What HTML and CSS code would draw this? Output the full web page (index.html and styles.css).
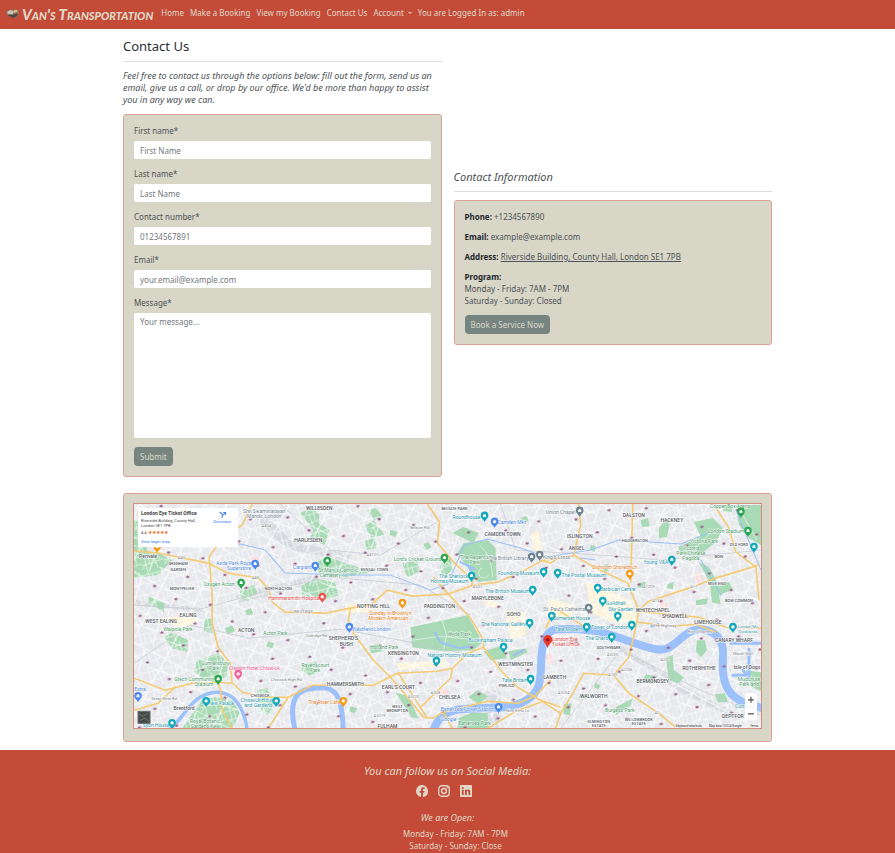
FILE: index.html
```html
<!DOCTYPE html>
<html lang="en">
<head>
<meta charset="utf-8">
<meta name="viewport" content="width=device-width, initial-scale=1">
<title>Van's Transportation - Contact Us</title>
<link rel="stylesheet" href="styles.css">
</head>
<body>
<header class="navbar">
  <a class="brand" href="#">
    <svg class="brand-logo" viewBox="0 0 14 11" aria-hidden="true">
      <path d="M0 4 3 2 11 1 13 4 12 8 7 10 1 7Z" fill="#8d745c"/>
      <path d="M1 4 4 2 8 3 7 6 2 6Z" fill="#c8c3b4"/>
      <path d="M8 2 11 2 12 4 8 5Z" fill="#d9b27a"/>
      <path d="M1 7 7 7 12 5 11 8 7 10Z" fill="#4b4a48"/>
    </svg>
    <span>Van's Transportation</span>
  </a>
  <nav class="nav-links" aria-label="Main">
    <a href="#">Home</a>
    <a href="#">Make a Booking</a>
    <a href="#">View my Booking</a>
    <a href="#">Contact Us</a>
    <button type="button" class="nav-toggle">Account<span class="caret"></span></button>
    <span>You are Logged In as: admin</span>
  </nav>
</header>

<main class="container">
  <div class="columns">
    <section class="form-column">
      <h1>Contact Us</h1>
      <hr>
      <p class="intro">Feel free to contact us through the options below: fill out the form, send us an email, give us a call, or drop by our office. We'd be more than happy to assist you in any way we can.</p>
      <form class="card">
        <div class="field"><label for="first">First name*</label><input id="first" type="text" placeholder="First Name"></div>
        <div class="field"><label for="last">Last name*</label><input id="last" type="text" placeholder="Last Name"></div>
        <div class="field"><label for="phone">Contact number*</label><input id="phone" type="tel" placeholder="01234567891"></div>
        <div class="field"><label for="email">Email*</label><input id="email" type="email" placeholder="your.email@example.com"></div>
        <div class="field"><label for="message">Message*</label><textarea id="message" placeholder="Your message..."></textarea></div>
        <button type="submit" class="btn">Submit</button>
      </form>
    </section>

    <section class="info-column">
      <h2>Contact Information</h2>
      <hr>
      <div class="card info">
        <p><strong>Phone:</strong> +1234567890</p>
        <p><strong>Email:</strong> example@example.com</p>
        <p><strong>Address:</strong> <a href="#">Riverside Building, County Hall, London SE1 7PB</a></p>
        <p><strong>Program:</strong><br>Monday - Friday: 7AM - 7PM<br>Saturday - Sunday: Closed</p>
        <a class="btn" href="#">Book a Service Now</a>
      </div>
    </section>
  </div>

  <section class="card map-card">
    <svg class="map" viewBox="134 504 626 224" role="img" aria-label="Map of London">
      <defs>
        <pattern id="streets" width="23" height="19" patternUnits="userSpaceOnUse" patternTransform="rotate(-14)">
          <path d="M0 4H23M0 13H12L23 11M5 0V19M14 4 16 19M19 0V11M0 17 5 13M9 4V13" fill="none" stroke="#fff" stroke-width=".8"/>
        </pattern>
        <pattern id="lanes" width="37" height="31" patternUnits="userSpaceOnUse" patternTransform="rotate(28)">
          <path d="M0 8H37M11 0V31M26 8 30 31M0 23 26 19" fill="none" stroke="#fff" stroke-width="1.1"/>
        </pattern>
        <pattern id="stations" width="71" height="47" patternUnits="userSpaceOnUse" patternTransform="rotate(-9)">
          <g fill="#d85563"><circle cx="9" cy="8" r="1.2"/><circle cx="42" cy="19" r="1.2"/><circle cx="61" cy="39" r="1.2"/><circle cx="24" cy="35" r="1.2"/></g>
          <path d="M7 8H11M40 19H44M59 39H63M22 35H26" stroke="#5267a8" stroke-width=".7"/>
        </pattern>
        <g id="pin"><path d="M0 0C-.6-2.300-3.800-3.600-3.800-6.600A3.800 3.800 0 0 1 3.800-6.600C3.800-3.600.6-2.300 0 0Z"/><path d="M-1.500-5V-7L0-8.300 1.500-7V-5Z" fill="#fff"/></g>
      </defs>
      <rect x="134" y="504" width="626" height="224" fill="#e7e9ed"/>
      <g fill="#fbf3da">
        <path d="M530 535 538 530 542 550 534 555ZM585 580 630 600 638 622 610 622 590 612ZM548 598 575 605 570 618 545 616ZM395 663 445 660 450 666 400 670ZM345 603 385 606 370 612 345 613ZM160 618 195 614 198 622 180 628ZM505 610 525 612 525 635 510 640ZM484 600 500 603 498 608 484 606Z"/>
      </g>
      <g fill="#fbdedd"><path d="M660 600 668 604 664 611 657 606ZM545 655 552 653 553 662 547 664ZM252 556 259 558 256 564 251 562ZM440 688 449 690 446 697 438 695ZM694 575 700 572 702 580 695 584Z"/></g>
      <g fill="#d8dbe0">
        <path d="M262 512 290 540 350 555 348 561 285 549 258 520ZM235 595 275 585 315 575 316 582 275 594 238 603ZM485 690 500 690 498 728 484 728ZM620 645 690 690 740 715 738 720 684 695 618 650ZM136 600 205 608 204 612 135 605Z"/>
      </g>
      <g fill="#a8dab5">
        <path d="M134 520 143 524 147 551 158 553 172 560 158 575 134 578ZM300 513 312 508 319 515 318 523 329 530 324 546 310 538 313 530ZM318 560 330 558 345 563 372 572 345 577 318 573ZM302 585 315 578 335 583 338 595 325 599 300 595ZM240 590 254 585 257 592 247 601 240 597ZM149 595 164 603 164 612 148 602ZM204 618 213 618 212 633 204 631ZM172 632 188 640 187 652 172 648 164 637Z"/>
        <path d="M197 660 218 653 228 663 226 677 205 680 194 671ZM182 728 202 700 215 697 232 700 240 713 232 728ZM257 690 267 688 274 702 268 715 261 711ZM303 663 316 662 320 671 309 675 301 670ZM365 526 373 520 384 535 371 538ZM365 540 374 538 376 548 365 550ZM366 510 375 508 383 517 374 520ZM439 566 450 557 452 570 442 578ZM402 563 417 561 419 571 407 578Z"/>
      </g>
      <rect x="134" y="504" width="626" height="224" fill="url(#streets)" opacity=".75"/>
      <rect x="134" y="504" width="626" height="224" fill="url(#lanes)" opacity=".8"/>
      <g fill="#a8dab5">
        <path d="M457 553 463 543 487 540 495 548 496 580 477 582 467 568ZM452 533 463 527 478 533 473 543ZM410 627 467 615 482 642 473 650 443 651 412 647ZM483 651 503 645 506 658 490 660ZM508 651 525 648 527 652 510 660ZM458 718 472 712 487 713 489 728 457 728ZM395 692 408 696 418 718 411 717ZM468 697 477 690 488 696 478 704ZM369 646 379 643 382 651 371 653Z"/>
        <path d="M677 547 700 537 693 522 712 518 722 528 715 542 695 558 680 552ZM735 505 760 505 760 545 748 538 738 525ZM698 562 708 567 717 583 728 582 732 589 718 595 720 604 711 602 709 583ZM658 528 664 521 669 524 666 537 658 538ZM665 657 672 655 673 670 683 677 678 683 668 680ZM615 707 632 698 630 705 615 715ZM696 640 704 640 706 650 700 657 695 651ZM645 674 656 676 651 684 642 680ZM563 704 571 703 569 715 563 714ZM640 520 647 518 649 526 641 527ZM724 505 732 505 731 512 722 511ZM714 694 724 693 727 702 717 702ZM745 670 760 672 760 691 750 686ZM695 600 707 598 706 604 695 605Z"/>
        <path d="M150 508h8v5h-8zM225 628l7-3 3 6-8 3zM245 610l6-2 2 6-6 1zM268 641l6 2-2 5-6-2zM390 530l7 2-2 5-6-2zM423 544l5-2 3 5-5 3zM590 545l5 1-1 6-5-2zM601 567l6-3 3 5-6 3zM638 583l7-1-1 6-7-1zM520 518l6-2 2 5-6 2zM595 683l5 2-2 4-5-2zM667 584l6-2-1 7-6-1zM580 693l7 1-2 5-7-2zM350 706l7 2-3 5-5-2z"/>
      </g>
      <path d="M441 618 446 635 443 650M462 572C470 562 478 556 490 560M479 545C488 553 491 562 492 577M482 568A5 5 0 1 0 488 574M412 640 440 636 478 640M690 552 715 528M740 512 756 540" fill="none" stroke="#e4f2e6" stroke-width=".8"/>
      <g fill="none" stroke="#c3c8d0" stroke-width=".7">
        <path d="M134 605 200 609 270 590 330 577 420 585 470 615M500 504 515 550 600 555 660 560 760 550M134 663 190 625 250 638 340 629 400 640 480 657M560 728 620 650 700 690 760 715M280 504 330 550 380 555 440 520"/>
      </g>
      <g fill="none" stroke="#9cc0f9" stroke-linecap="round" stroke-linejoin="round">
        <path d="M168 730C180 722 187 706 197 699S217 690 227 694 245 712 247 730" stroke-width="3.500"/>
        <path d="M295 730C289 707 293 692 307 689S333 686 338 698 342 718 343 730" stroke-width="5"/>
        <path d="M433 730C438 716 446 711 460 709 485 706 507 710 522 702S539 687 540 673 540 652 543 643 549 629 558 629 584 628 600 632 632 643 650 648 672 644 684 635 709 628 717 637 721 657 722 671 728 695 742 702L762 708" stroke-width="8"/>
        <path d="M460 562 474 569M468 565 472 573M434 632 440 642 459 648 471 646M513 655 523 650" stroke-width="2"/>
        <path d="M209 545 240 544 265 550 285 573 345 575 390 575 430 590 447 584 464 545 487 539 520 548 545 557 590 550 618 540 680 544 710 532M580 558 595 560M700 560 720 595M735 510 760 570" stroke-width="1"/>
        <path d="M730 643H760M732 675H748V649M748 677 742 670M651 626 657 624" stroke-width="3"/>
      </g>
      <g fill="none" stroke="#f5cb73" stroke-width="1.600" stroke-linejoin="round">
        <path d="M134 551 158 553 208 563 228 573 258 578 268 588 272 602 285 612 325 613 350 608 370 605 387 590 412 596 447 594 473 585 497 582 520 572 543 560 557 558 573 556"/>
        <path d="M252 504 242 525 222 538 209 557 212 595 212 623 218 647 230 663 232 682"/>
        <path d="M134 678 165 690 192 683 218 682 233 683 242 692 265 697 288 697 312 685 340 685 373 685 397 673 437 671 452 668 467 653 483 647 500 670 517 687 540 700 560 707"/>
        <path d="M134 710 158 703 176 686M218 682 221 693 222 710 232 728M288 697 268 728"/>
        <path d="M427 504 439 522 437 543 453 562 472 580 471 586M433 577 447 593 470 618 483 640V648"/>
        <path d="M350 608 348 620 353 633 373 660 390 677 407 697 423 717 432 718 443 712 487 701 517 703 534 696 550 680M398 673 420 707 450 678 452 668M420 707 427 718M443 712 452 728"/>
        <path d="M578 504 580 525 573 555 595 568 627 583 633 598 638 610 634 632 628 657 613 675 583 673 572 693 560 713 555 728M630 582 632 504M557 610 583 626M638 610 648 601 688 588 715 578 758 565"/>
        <path d="M715 508 728 528 735 552 755 567 758 600M636 611 698 617 725 627 760 628M637 622 670 626 695 624 715 632M613 675 628 693 658 713 675 727M560 713 540 700M540 560 550 563 557 558M487 728 515 711 540 702M551 616 545 628"/>
      </g>
      <rect x="134" y="504" width="626" height="224" fill="url(#stations)"/>

      <g class="area">
        <text x="319" y="510">WILLESDEN</text><text x="308" y="542">HARLESDEN</text><text x="278" y="590" class="sm">NORTH ACTON</text><text x="182" y="590" class="sm">MONTPELIER</text><text x="188" y="617">EALING</text><text x="161" y="623">WEST EALING</text><text x="246" y="632">ACTON</text><text x="260" y="697" class="sm">CHISWICK</text>
        <text x="343" y="640">SHEPHERD'S</text><text x="346" y="646">BUSH</text><text x="345" y="686">HAMMERSMITH</text><text x="373" y="608">NOTTING HILL</text><text x="439" y="608">PADDINGTON</text><text x="454" y="510" class="sm">BELSIZE PARK</text><text x="502" y="536">CAMDEN TOWN</text><text x="487" y="600">MARYLEBONE</text><text x="513" y="616">SOHO</text><text x="403" y="655">KENSINGTON</text><text x="398" y="689">EARL'S COURT</text><text x="449" y="699">CHELSEA</text><text x="397" y="708" class="sm">WEST</text><text x="397" y="712" class="sm">BROMPTON</text><text x="387" y="728">FULHAM</text>
        <text x="515" y="666">WESTMINSTER</text><text x="506" y="687" class="sm">PIMLICO</text><text x="554" y="679">LAMBETH</text><text x="593" y="698">WALWORTH</text><text x="652" y="683">BERMONDSEY</text><text x="698" y="670">ROTHERHITHE</text><text x="733" y="642">CANARY WHARF</text><text x="707" y="624">LIMEHOUSE</text><text x="674" y="618">SHADWELL</text><text x="652" y="612">WHITECHAPEL</text><text x="579" y="538">ISLINGTON</text><text x="576" y="550">ANGEL</text><text x="633" y="517">DALSTON</text><text x="671" y="522">HACKNEY</text><text x="634" y="542" class="sm">HAGGERSTON</text><text x="718" y="558" class="sm">BOW</text><text x="738" y="546" class="sm">OLD FORD</text><text x="738" y="602" class="sm">BOW COMMON</text><text x="716" y="585" class="sm">MILE END</text><text x="732" y="718">DEPTFOR</text><text x="598" y="723" class="sm">ELMINGTON</text><text x="598" y="727" class="sm">ESTATE</text><text x="638" y="721" class="sm">WILLOWBROOK</text><text x="638" y="725" class="sm">ESTATE</text><text x="608" y="649" class="sm">SOUTHWARK</text><text x="178" y="565" class="sm">GRENHAM</text><text x="178" y="571" class="sm">GARDEN</text><text x="374" y="571" class="sm">KENSAL TOWN</text>
        <text x="148" y="558">Perivale</text><text x="184" y="710">Brentford</text><text x="746" y="669">Isle of Dogs</text>
      </g>
      <g class="place" fill="#4a9a68">
        <text x="178" y="631">Walpole Park</text><text x="275" y="635">Acton Park</text><text x="215" y="665">Gunnersbury</text><text x="214" y="670">Park</text><text x="194" y="681">Gtech Community</text><text x="204" y="686">Stadium</text><text x="219" y="586">Oxygen Acton</text><text x="338" y="572">St Mary's Catholic</text><text x="330" y="577">Cemetery</text><text x="205" y="723">Royal Botanic</text><text x="205" y="728">Gardens Kew</text><text x="315" y="667">Ravenscourt</text><text x="315" y="672">Park</text><text x="384" y="649">Holland Park</text><text x="459" y="636">Hyde Park</text><text x="417" y="561">Lord's Cricket Ground</text><text x="474" y="559">The Regent's</text><text x="474" y="564">Park</text><text x="474" y="725">Battersea Park</text><text x="619" y="712">Burgess Park</text><text x="703" y="543">Victoria Park</text><text x="690" y="550">Victoria</text><text x="690" y="555">Park Chinese</text><text x="690" y="560">Pagoda</text><text x="725" y="533">London Stadium</text><text x="729" y="508">Copper Box Arena</text><text x="748" y="681">Mudchute</text><text x="748" y="686">Park and</text>
      </g>
      <g class="place" fill="#2b98ab">
        <text x="466" y="519">Roundhouse</text><text x="453" y="578">The Sherlock</text><text x="449" y="583">Holmes Museum</text><text x="518" y="575">Founding Museum</text><text x="507" y="593">The British Museum</text><text x="583" y="577">The Postal Museum</text><text x="617" y="591">Barbican Centre</text><text x="615" y="605">Guildhall</text><text x="620" y="611">Sky Garden</text><text x="571" y="620">Somerset House</text><text x="503" y="626">The National Gallery</text><text x="490" y="642">Buckingham Palace</text><text x="454" y="657">Natural History Museum</text><text x="514" y="682">Tate Britain</text><text x="568" y="631">Tate Modern</text><text x="609" y="629">Tower of London</text><text x="596" y="640">The Shard</text><text x="655" y="564">Young V&amp;A</text><text x="747" y="628" class="narrow">London Mu</text><text x="747" y="633" class="narrow">Docklands</text><text x="221" y="705">Kew Palace</text><text x="258" y="702">Chiswick House</text><text x="258" y="707">and Gardens</text><text x="156" y="727">Syon House</text><text x="740" y="708">Cutty</text>
      </g>
      <g class="place" fill="#4c89df">
        <text x="234" y="565">Asda Park Royal</text><text x="239" y="570">Superstore</text><text x="302" y="569">Cargiant</text><text x="371" y="631">Westfield London</text><text x="511" y="524">Camden Mkt</text><text x="467" y="711">Battersea Power Station</text><text x="140" y="691">Extra</text><text x="448" y="721">Google</text>
      </g>
      <g class="place" fill="#71838f"><text x="264" y="513">Shri Swaminarayan</text><text x="264" y="518">Mandir, London</text><text x="508" y="560">The British Library</text><text x="556" y="559">King's Cross</text><text x="560" y="514">Union Chapel</text><text x="564" y="611">St. Paul's Cathedral</text></g>
      <g class="place" fill="#e37f23"><text x="390" y="615">Sunday in Brooklyn</text><text x="390" y="620">Modern American...</text><text x="614" y="569">Dishoom Shoreditch</text><text x="324" y="704">The River Cafe</text></g>
      <g class="place" fill="#e04445"><text x="294" y="600">Hammersmith Hospital</text><text x="564" y="641">London Eye</text><text x="565" y="646">Ticket Office</text></g>
      <g class="place" fill="#e35289"><text x="254" y="670">Clayton Hotel Chiswick</text></g>
      <g class="road">
        <text x="181" y="559">A40</text><text x="255" y="579">A40</text><text x="303" y="613">WESTWAY</text><text x="266" y="527">A404</text><text x="419" y="529">Belsize Rd</text><text x="372" y="556">A4127</text><text x="477" y="588">A501</text><text x="693" y="588">A11</text><text x="655" y="602">A13</text><text x="648" y="588">A1209</text><text x="664" y="661">A200</text><text x="612" y="656">A3200</text><text x="612" y="676">A100</text><text x="626" y="671">A2206</text><text x="656" y="714">A2</text><text x="563" y="694">A3204</text><text x="379" y="717">A3219</text><text x="435" y="694">A308</text><text x="413" y="698">A3220</text><text x="286" y="681">Chiswick High Rd</text><text x="164" y="700">Great West Rd</text><text x="699" y="633">River Thames</text><text x="517" y="712">Nine Elms Ln</text><text x="742" y="655">Marsh Wall</text><text x="316" y="637">Uxbridge Rd</text><text x="664" y="627">The Highway</text>
      </g>

      <g fill="#2aa650"><use href="#pin" x="241" y="589"/><use href="#pin" x="327" y="567"/><use href="#pin" x="218" y="685"/><use href="#pin" x="444" y="564"/><use href="#pin" x="740" y="518"/><use href="#pin" x="747" y="537"/></g>
      <g fill="#12a9bb"><use href="#pin" x="484" y="522"/><use href="#pin" x="471" y="582"/><use href="#pin" x="543" y="578"/><use href="#pin" x="557" y="579"/><use href="#pin" x="532" y="596"/><use href="#pin" x="597" y="594"/><use href="#pin" x="602" y="607"/><use href="#pin" x="617" y="622"/><use href="#pin" x="551" y="622"/><use href="#pin" x="529" y="629"/><use href="#pin" x="503" y="653"/><use href="#pin" x="436" y="667"/><use href="#pin" x="530" y="685"/><use href="#pin" x="586" y="633"/><use href="#pin" x="631" y="631"/><use href="#pin" x="611" y="643"/><use href="#pin" x="671" y="566"/><use href="#pin" x="753" y="553"/><use href="#pin" x="732" y="633"/><use href="#pin" x="206" y="707"/><use href="#pin" x="276" y="707"/><use href="#pin" x="172" y="729"/></g>
      <g fill="#4c89ed"><use href="#pin" x="255" y="570"/><use href="#pin" x="315" y="572"/><use href="#pin" x="494" y="528"/><use href="#pin" x="349" y="633"/><use href="#pin" x="498" y="713"/><use href="#pin" x="138" y="702"/></g>
      <g fill="#6d8590"><use href="#pin" x="579" y="517"/><use href="#pin" x="531" y="563"/><use href="#pin" x="539" y="561"/><use href="#pin" x="588" y="614"/></g>
      <g fill="#f49a17"><use href="#pin" x="402" y="609"/><use href="#pin" x="629" y="580"/><use href="#pin" x="343" y="707"/><use href="#pin" x="157" y="553"/></g>
      <use href="#pin" x="322" y="603" fill="#ef5350"/><use href="#pin" x="238" y="680" fill="#ef609f"/>
      <path d="M547 648C546 644 542.500 642 542.500 639.500A4.600 4.600 0 0 1 551.700 639.500C551.700 642 548 644 547 648Z" fill="#e8372b"/><circle cx="547" cy="639.500" r="1.700" fill="#98170f"/>

      <rect x="138" y="508" width="100" height="39" fill="#fff"/>
      <g class="popup"><text x="141" y="515" class="title">London Eye Ticket Office</text><text x="141" y="522">Riverside Building, County Hall,</text><text x="141" y="527">London SE1 7PB</text><text x="141" y="534">4.4 <tspan class="stars">★★★★★</tspan></text><text x="141" y="543" class="link">View larger map</text><text x="213" y="523" class="link">Directions</text></g>
      <path d="M222 518V514L219.500 512M222 516 225 513M223 512.500H225.400V515" fill="none" stroke="#3f7fe5"/>
      <rect x="138" y="711" width="12" height="12" fill="#444a49" stroke="#68706c"/><path d="M139 714 143 716 148 713M140 720 145 718 149 721" fill="none" stroke="#68706c"/>
      <rect x="744" y="693" width="12" height="27" fill="#fff"/><path d="M747 699.500H753M750 696.500V702.500M747 713.500H753" stroke="#555" stroke-width="1.200"/><path d="M745 706.500H755" stroke="#ddd" stroke-width=".5"/>
      <rect x="674" y="723" width="86" height="5" fill="#f2f3f4" opacity=".8"/>
      <g class="credit"><text x="675" y="727">Keyboard shortcuts</text><text x="708" y="727">Map data ©2024 Google</text><text x="749" y="727">Terms</text></g>
    </svg>
  </section>
</main>

<footer>
  <h2>You can follow us on Social Media:</h2>
  <div class="social">
    <a href="#" aria-label="Facebook"><svg viewBox="0 0 16 16"><path d="M16 8.050A8 8 0 1 0 6.750 16v-5.600H4.700V8.050h2V6.300c0-2 1.200-3.150 3-3.150.9 0 1.800.16 1.800.16v2h-1c-1 0-1.300.6-1.300 1.260v1.500h2.200l-.35 2.350H9.250V16A8 8 0 0 0 16 8.050Z"/></svg></a>
    <a href="#" aria-label="Instagram"><svg viewBox="0 0 16 16"><rect x="1" y="1" width="14" height="14" rx="4" fill="none" stroke="currentColor" stroke-width="1.800"/><circle cx="8" cy="8" r="3.300" fill="none" stroke="currentColor" stroke-width="1.800"/><circle cx="12.200" cy="3.800" r="1"/></svg></a>
    <a href="#" aria-label="LinkedIn"><svg viewBox="0 0 16 16"><path fill-rule="evenodd" d="M1 0H15A1 1 0 0 1 16 1V15A1 1 0 0 1 15 16H1A1 1 0 0 1 0 15V1A1 1 0 0 1 1 0ZM2.500 6.200V13.400H4.900V6.200ZM3.700 2.500A1.350 1.350 0 1 0 3.700 5.200 1.350 1.350 0 0 0 3.700 2.500ZM6.600 6.200V13.400H9V9.500C9 7.500 11.200 7.500 11.200 9.500V13.400H13.600V8.900C13.600 5.400 10 5.300 9 7.100V6.200Z"/></svg></a>
  </div>
  <h3>We are Open:</h3>
  <p class="hours">Monday - Friday: 7AM - 7PM<br>Saturday - Sunday: Close</p>
</footer>
</body>
</html>
```
FILE: styles.css
```css
* { box-sizing: border-box; }
body {
  margin: 0;
  background: #fff;
  color: #4d5356;
  font: 8px/12px "Noto Sans", sans-serif;
}
h1, h2, h3, p { margin: 0; }
h1, h2, h3 { font-family: "Noto Sans", sans-serif; font-weight: 400; }
a { color: inherit; }
button, input, textarea { font: inherit; }

.navbar {
  display: flex;
  align-items: center;
  gap: 8px;
  min-height: 29px;
  padding: 0 6px;
  background: #c44b37;
  color: #dfd8c8;
}
.navbar a { text-decoration: none; }
.brand {
  display: flex;
  align-items: center;
  gap: 2px;
  padding-bottom: 2px;
  font: italic 900 15px/18px Lato, sans-serif;
  font-variant: small-caps;
  white-space: nowrap;
}
.brand-logo { width: 14px; height: 11px; }
.nav-links { display: flex; align-items: center; gap: 6px; white-space: nowrap; padding-bottom: 3px; }
.nav-toggle {
  display: flex;
  align-items: center;
  gap: 4px;
  padding: 0;
  border: 0;
  background: none;
  color: inherit;
}
.caret { border: 2px solid transparent; border-top-color: currentColor; border-bottom: 0; }

.container { max-width: 649px; margin: 0 auto; }
.columns {
  display: grid;
  grid-template-columns: 1fr 1fr;
  gap: 12px;
  align-items: center;
  margin-bottom: 8px;
}
.form-column { padding: 8px 0; }
h1 { color: #2b3035; font-size: 13px; line-height: 18px; }
hr { margin: 6px 0 8px; border: 0; border-top: 1px solid #dcdddf; }
.intro { margin-bottom: 8px; font: italic 9px/12px "Noto Sans", sans-serif; }
.info-column h2 { font-size: 11px; line-height: 16px; font-style: italic; }

.card {
  padding: 10px;
  border: 1px solid #dda295;
  border-radius: 3px;
  background: #d8d6c7;
}
.field { margin-bottom: 9px; }
.field label { display: block; margin-bottom: 4px; }
.field input, .field textarea {
  display: block;
  width: 100%;
  height: 18px;
  padding: 2px 6px;
  border: 0;
  border-radius: 2px;
  background: #fff;
  color: #212529;
}
.field textarea { height: 125px; padding-top: 3px; resize: none; }
::placeholder { color: #74797d; opacity: 1; }
.btn {
  display: inline-block;
  padding: 3px 6px;
  border: 0;
  border-radius: 4px;
  background: #778581;
  color: #d9d8c9;
  line-height: 13px;
  text-decoration: none;
}
.info p { margin-bottom: 8px; }
.info strong { color: #24292d; }

.map-card { margin-bottom: 8px; padding: 9px; padding-bottom: 12px; }
.map { display: block; width: 100%; height: auto; border: 1px solid #d58f80; }
.map text { font-family: Roboto, sans-serif; text-anchor: middle; paint-order: stroke; stroke: #fff; stroke-width: .8px; }
.area text { font-size: 5px; font-weight: 500; fill: #55595f; }
.area .sm { font-size: 4px; }
.place text { font-size: 5px; }
.place .narrow { font-size: 4px; }
.road text { font-size: 4px; fill: #7a7d80; }
.map .popup text { font-size: 4px; text-anchor: start; stroke: none; fill: #444; }
.map .popup .title { font-size: 5px; font-weight: 700; }
.map .popup .link { fill: #3478e5; }
.map .popup .stars { fill: #e7711b; font-size: 5px; }
.map .credit text { font-size: 3px; text-anchor: start; stroke: none; fill: #333; }

footer {
  padding: 13px 12px 12px;
  background: #c44b37;
  color: #dfd8c8;
  text-align: center;
}
footer h2 { font-size: 11px; line-height: 16px; font-style: italic; }
footer h3 { margin-bottom: 4px; font-size: 9px; line-height: 12px; font-style: italic; }
.social { display: flex; justify-content: center; gap: 10px; margin: 6px 0 15px; padding-right: 8px; }
.social svg { display: block; width: 12px; height: 12px; fill: currentColor; }
.hours { padding-left: 16px; }
```
